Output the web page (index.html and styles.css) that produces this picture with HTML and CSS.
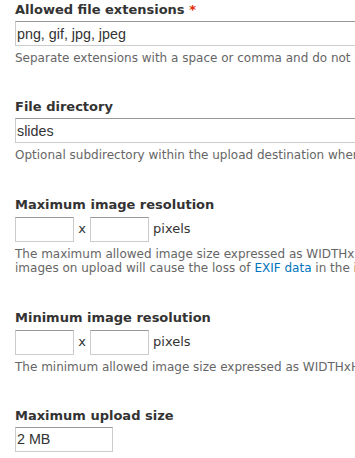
FILE: index.html
```html
<!DOCTYPE html>
<html lang="en">
<head>
  <meta charset="UTF-8"/>
  <title>Image field settings</title>
  <link rel="stylesheet" href="styles.css">
</head>
<body>

  <form class="settings">
    <div class="form-item">
      <label for="extensions">Allowed file extensions <span class="form-required">*</span></label>
      <input type="text" id="extensions" class="form-text wide" value="png, gif, jpg, jpeg"/>
      <div class="description">Separate extensions with a space or comma and do not include the leading dot.</div>
    </div>

    <div class="form-item">
      <label for="directory">File directory</label>
      <input type="text" id="directory" class="form-text wide" value="slides"/>
      <div class="description">Optional subdirectory within the upload destination where files will be stored. Do not include preceding or trailing slashes.</div>
    </div>

    <div class="form-item">
      <label for="max-x">Maximum image resolution</label>
      <div class="resolution">
        <input type="text" id="max-x" class="form-text small"/> x <input type="text" id="max-y" class="form-text small"/> pixels
      </div>
      <div class="description">The maximum allowed image size expressed as WIDTHxHEIGHT (e.g. 640x480). Leave blank for no restriction. If a larger image is uploaded, it will be resized to reflect the given width and height. Resizing<br>images on upload will cause the loss of <a href="#">EXIF data</a> in the image.</div>
    </div>

    <div class="form-item">
      <label for="min-x">Minimum image resolution</label>
      <div class="resolution">
        <input type="text" id="min-x" class="form-text small"/> x <input type="text" id="min-y" class="form-text small"/> pixels
      </div>
      <div class="description">The minimum allowed image size expressed as WIDTHxHEIGHT (e.g. 640x480). Leave blank for no restriction. If a smaller image is uploaded, it will be rejected.</div>
    </div>

    <div class="form-item">
      <label for="max-size">Maximum upload size</label>
      <input type="text" id="max-size" class="form-text medium" value="2 MB"/>
    </div>
  </form>

</body>
</html>
```

FILE: styles.css
```css
html, body {
  overflow: hidden;
}

body {
  margin: 0;
  background-color: #fff;
  color: #333;
  font-family: 'DejaVu Sans', sans-serif;
  font-size: 13px;
}

.settings {
  width: 1200px;
  padding: 2px 15px 0;
}

.form-item {
  margin-bottom: 34px;
}

label {
  display: block;
  font-weight: bold;
  line-height: 16px;
  margin-bottom: 3px;
}

.form-required {
  color: #e32700;
}

.form-text {
  box-sizing: border-box;
  height: 25px;
  margin: 0;
  padding: 2px 1px;
  border: 1px solid #ccc;
  border-top-color: #999;
  font-family: 'Liberation Sans', Arial, sans-serif;
  font-size: 14.3px;
  color: #333;
  vertical-align: middle;
}

.form-text.wide {
  display: block;
  width: 100%;
}

.form-text.small {
  width: 59px;
}

.form-text.medium {
  display: block;
  width: 98px;
}

.resolution {
  line-height: 25px;
  white-space: nowrap;
}

.description {
  margin-top: 5px;
  font-size: 12px;
  line-height: 1.2;
  color: #666;
  white-space: nowrap;
}

.description a {
  color: #0074bd;
  text-decoration: none;
}
```
